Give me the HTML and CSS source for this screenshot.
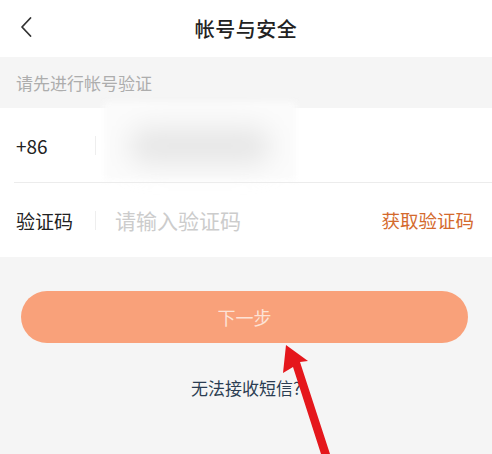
FILE: index.html
```html
<!DOCTYPE html>
<html lang="zh-CN">
<head>
<meta charset="utf-8">
<title>帐号与安全</title>
<link rel="stylesheet" href="styles.css">
</head>
<body>
<div class="page">
  <header class="topbar">
    <span class="back">
      <svg width="14" height="22" viewBox="0 0 14 22"><path d="M11.5 2 L3 11 L11.5 20" fill="none" stroke="#333" stroke-width="1.8" stroke-linecap="round" stroke-linejoin="round"/></svg>
    </span>
    <h1 class="title">帐号与安全</h1>
  </header>
  <div class="notice">请先进行帐号验证</div>
  <section class="form">
    <div class="row row-phone">
      <span class="label">+86</span>
      <span class="sep"></span>
      <span class="blur-wrap"><span class="blur"></span></span>
    </div>
    <div class="row row-code">
      <span class="label">验证码</span>
      <span class="sep"></span>
      <span class="placeholder">请输入验证码</span>
      <span class="getcode">获取验证码</span>
    </div>
  </section>
  <div class="actions">
    <button class="next">下一步</button>
    <a class="help">无法接收短信?</a>
  </div>
  <svg class="arrow" width="492" height="454" viewBox="0 0 492 454">
    <polygon points="286,345 308,361 300,362 330,454 321,454 293,367 283,373" fill="#e5171c"/>
  </svg>
</div>
</body>
</html>
```

FILE: styles.css
```css
* { box-sizing: border-box; }
html, body { margin: 0; padding: 0; }
body {
  background: #f5f5f5;
  font-family: "Noto Sans CJK SC", "Noto Sans", sans-serif;
  width: 492px;
  height: 454px;
  overflow: hidden;
}
.page { position: relative; width: 492px; height: 454px; }
.topbar {
  height: 57px;
  background: #fff;
  display: flex;
  align-items: center;
  justify-content: center;
  position: relative;
}
.back {
  position: absolute;
  left: 19px;
  top: 16px;
  display: flex;
}
.title {
  margin: 0;
  font-size: 20px;
  font-weight: 500;
  color: #222;
  line-height: 1;
  letter-spacing: 0.5px;
}
.notice {
  height: 51px;
  display: flex;
  align-items: center;
  padding-left: 16px;
  font-size: 17px;
  color: #adadad;
}
.form {
  background: #fff;
  height: 149px;
}
.row {
  display: flex;
  align-items: center;
  position: relative;
}
.row-phone {
  height: 75px;
}
.row-phone::after {
  content: "";
  position: absolute;
  left: 14px;
  right: 0;
  bottom: 0;
  height: 1px;
  background: #ececec;
}
.row-code { height: 74px; }
.label {
  width: 95px;
  padding-left: 16px;
  font-size: 19px;
  color: #222;
}
.sep {
  width: 1px;
  height: 19px;
  background: #eeeeee;
}
.blur-wrap {
  margin-left: 8px;
  width: 192px;
  height: 78px;
  margin-top: -10px;
  background: #fbfbfb;
  display: flex;
  align-items: center;
  justify-content: center;
  filter: blur(3px);
}
.blur {
  width: 140px;
  height: 36px;
  border-radius: 18px;
  background: #e6e6e6;
  filter: blur(12px);
  margin-top: 10px;
}
.placeholder {
  margin-left: 19px;
  font-size: 21px;
  color: #cccccc;
  flex: 1;
}
.getcode {
  margin-right: 18px;
  font-size: 18.5px;
  color: #d46a2d;
}
.actions {
  display: flex;
  flex-direction: column;
  align-items: center;
}
.next {
  margin: 34px 24px 0 21px;
  align-self: stretch;
  height: 52px;
  border: none;
  border-radius: 26px;
  background: #f9a17a;
  color: #fde3d6;
  font-family: inherit;
  font-size: 18px;
  padding: 0;
}
.help {
  margin-top: 34px;
  font-size: 17px;
  color: #2b3d52;
  line-height: 22px;
}
.arrow {
  position: absolute;
  left: 0;
  top: 0;
  pointer-events: none;
}
```
